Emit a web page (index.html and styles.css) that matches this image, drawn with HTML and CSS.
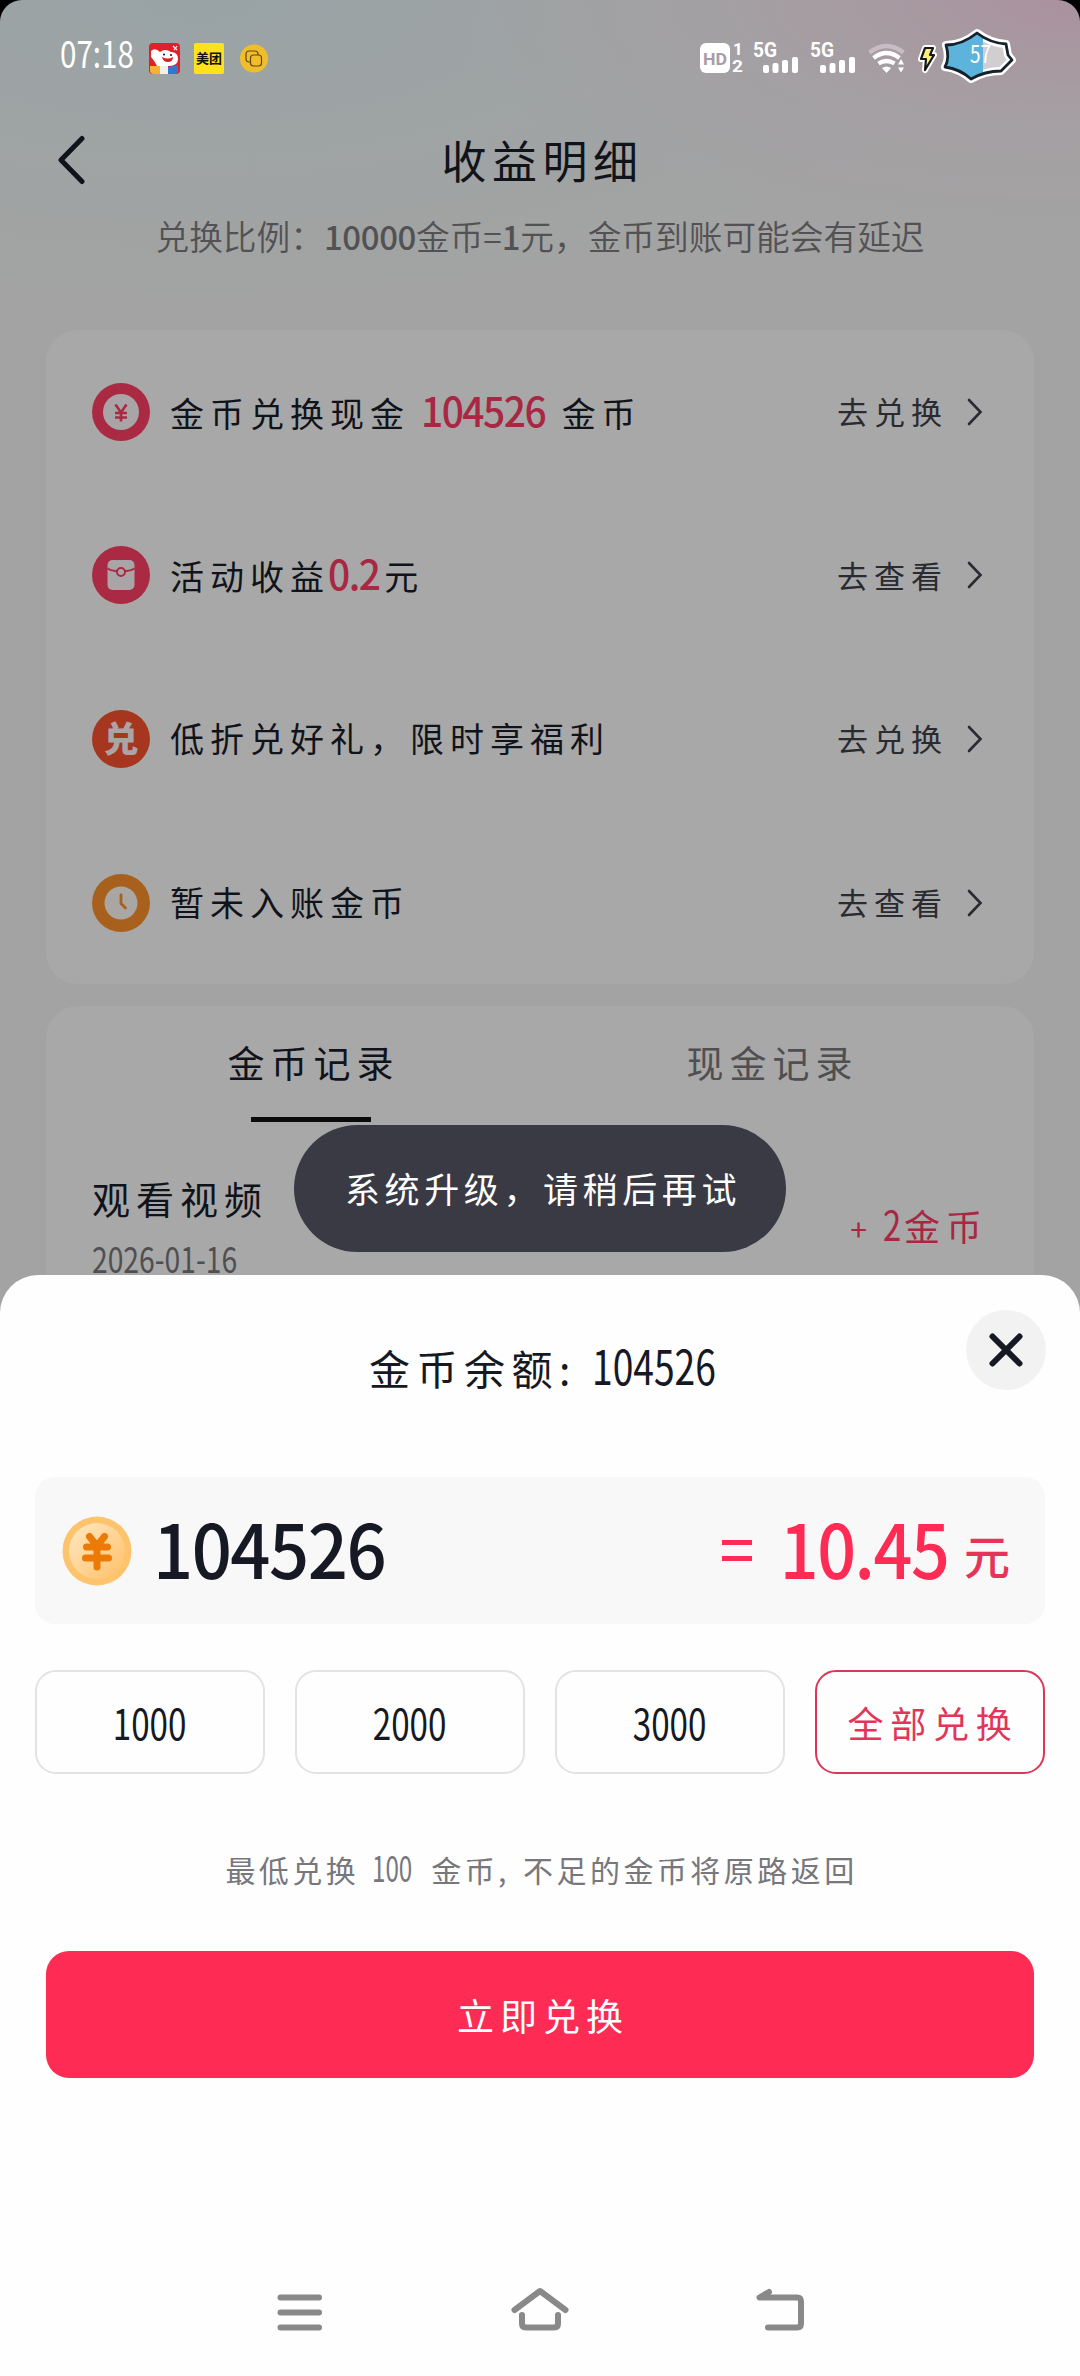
FILE: index.html
```html
<!DOCTYPE html>
<html lang="zh-CN">
<head>
<meta charset="utf-8">
<title>收益明细</title>
<link rel="stylesheet" href="styles.css">
</head>
<body>
<div class="screen">
  <div class="phone">
    <header class="status">
      <span class="clock"><span class="narrow">07:18</span></span>
      <svg class="app-jd" width="31" height="31" viewBox="0 0 31 31">
        <rect width="31" height="31" rx="4" fill="#e3202a"/>
        <path d="M2 8Q6 4 11 9Q16 5 22 9Q29 9 29 16Q29 23 20 23L8 23Q5 17 2 14Z" fill="#fff"/>
        <path d="M13 14q6 3 11 0q0 5-5 5t-6-5z" fill="#d8212b"/>
        <circle cx="15" cy="11.500" r="1.100" fill="#222"/><circle cx="22" cy="12" r="1.100" fill="#222"/>
        <path d="M24 3l4 4M28 3l-3 4" stroke="#fff" stroke-width="1.200"/>
        <path d="M1 23h10v8H5q-4 0-4-4z" fill="#f6b52c"/><path d="M11 23h8v8h-8z" fill="#f4efe9"/>
        <path d="M19 24l10-2v5q0 4-4 4h-6z" fill="#3576cf"/>
      </svg>
      <span class="app-mt">美团</span>
      <svg class="app-coin" width="28" height="29" viewBox="0 0 28 29" fill="none" stroke="#5c4a14" stroke-width="1.200">
        <circle cx="14" cy="14.500" r="14" fill="#f2bd2c" stroke="none"/>
        <path d="M10 18H9a3 3 0 0 1-3-3V10a3 3 0 0 1 3-3h6a3 3 0 0 1 3 3v1"/>
        <rect x="10.500" y="11" width="11" height="11" rx="3"/>
      </svg>
      <svg class="signals" width="316" height="60" viewBox="0 0 316 60">
        <rect x="0" y="15" width="30" height="30" rx="6" fill="#fff"/>
        <text x="3" y="37" class="hd" textLength="24" lengthAdjust="spacingAndGlyphs">HD</text>
        <text x="33" y="27" class="sig-num">1</text><text x="32" y="44" class="sig-num" textLength="11" lengthAdjust="spacingAndGlyphs">2</text>
        <text x="53" y="29" class="sig" textLength="24" lengthAdjust="spacingAndGlyphs">5G</text>
        <text x="110" y="29" class="sig" textLength="24" lengthAdjust="spacingAndGlyphs">5G</text>
        <g fill="#fff">
          <rect x="63" y="37" width="6" height="8" rx="2"/><rect x="72.500" y="35" width="6" height="10" rx="2"/><rect x="82" y="32" width="6" height="13" rx="2"/><rect x="92" y="29" width="6" height="16" rx="2"/>
          <rect x="120" y="37" width="6" height="8" rx="2"/><rect x="129.500" y="35" width="6" height="10" rx="2"/><rect x="139" y="32" width="6" height="13" rx="2"/><rect x="149" y="29" width="6" height="16" rx="2"/>
        </g>
        <g fill="none" stroke="#fff" stroke-width="4.200">
          <path d="M169.500 24.500Q186.500 11.500 203.500 24.500" stroke="#c9bdc5"/>
          <path d="M173.500 30Q186.500 20 199.500 30"/>
          <path d="M178.500 35.500Q186.500 30.500 194.500 35.500"/>
        </g>
        <path d="M182 40q4.500-3 9 0l-4.500 5zM198 36.500l3-5.500 3 5.500zM198 39.500l3 5 3-5z" fill="#fff"/>
        <path d="M225 20h8l-3 7h4l-9 15 1-11h-5z" fill="#f5ee7e" stroke="#fff" stroke-width="6" stroke-linejoin="round"/>
        <path d="M225 20h8l-3 7h4l-9 15 1-11h-5z" fill="#f5ee7e" stroke="#17171a" stroke-width="2.200" stroke-linejoin="round"/>
        <path d="M277 5Q290 15 306 16L308 27L312 32L301 43Q285 43 271 51Q260 41 245 39Q250 30 246 17Q262 17 277 5Z" fill="#d0ced1" stroke="#fff" stroke-width="8" stroke-linejoin="round"/>
        <path d="M283 9.500V46.500L271 51Q260 41 245 39Q250 30 246 17Q262 17 277 5Z" fill="#5cb4dc"/>
        <path d="M277 5Q290 15 306 16L308 27L312 32L301 43Q285 43 271 51Q260 41 245 39Q250 30 246 17Q262 17 277 5Z" fill="none" stroke="#15222b" stroke-width="2.800" stroke-linejoin="round"/>
        <text x="270" y="35" class="battery-num" textLength="21" lengthAdjust="spacingAndGlyphs">57</text>
      </svg>
    </header>

    <div class="titlebar">
      <svg class="back" width="30" height="50" viewBox="0 0 30 50"><path d="M25 3.500L4 25L25 46.500" fill="none" stroke="#11131b" stroke-width="5" stroke-linecap="round" stroke-linejoin="round"/></svg>
      <h1>收益明细</h1>
    </div>
    <p class="ratio">兑换比例：<b>10000</b>金币=<b>1</b>元，金币到账可能会有延迟</p>

    <section class="card">
      <div class="row">
        <svg class="ico" width="58" height="58" viewBox="0 0 58 58"><circle cx="29" cy="29" r="29" fill="#a92a42"/><circle cx="29" cy="29" r="18" fill="#a9a4a6"/><path d="M23.500 21.500L29 29.500L34.500 21.500M29 29.500V38.500M23 30h12M23 34.500h12" fill="none" stroke="#a92a42" stroke-width="2.600"/></svg>
        <span class="label">金币兑换现金<b class="mid">104526</b>金币</span>
        <span class="go">去兑换</span><svg class="chev" width="16" height="28" viewBox="0 0 16 28"><path d="M2 2L13.500 14L2 26"/></svg>
      </div>
      <div class="row">
        <svg class="ico" width="58" height="58" viewBox="0 0 58 58"><circle cx="29" cy="29" r="29" fill="#a92a42"/><rect x="15.500" y="14" width="27" height="30" rx="5" fill="#a9a4a6"/><path d="M15.500 22.500Q20 25.500 25 25M42.500 22.500Q38 25.500 33 25" fill="none" stroke="#a92a42" stroke-width="2"/><circle cx="29" cy="26" r="4" fill="#a9a4a6" stroke="#a92a42" stroke-width="2"/></svg>
        <span class="label">活动收益<b class="tight">0.2</b>元</span>
        <span class="go">去查看</span><svg class="chev" width="16" height="28" viewBox="0 0 16 28"><path d="M2 2L13.500 14L2 26"/></svg>
      </div>
      <div class="row">
        <span class="ico dui">兑</span>
        <span class="label">低折兑好礼，限时享福利</span>
        <span class="go">去兑换</span><svg class="chev" width="16" height="28" viewBox="0 0 16 28"><path d="M2 2L13.500 14L2 26"/></svg>
      </div>
      <div class="row">
        <svg class="ico" width="58" height="58" viewBox="0 0 58 58"><circle cx="29" cy="29" r="29" fill="#a8611c"/><circle cx="29" cy="29" r="16.500" fill="#a9a6a3"/><path d="M29 21V29.500L33.500 34" fill="none" stroke="#a8611c" stroke-width="2.800" stroke-linecap="round" stroke-linejoin="round"/></svg>
        <span class="label">暂未入账金币</span>
        <span class="go">去查看</span><svg class="chev" width="16" height="28" viewBox="0 0 16 28"><path d="M2 2L13.500 14L2 26"/></svg>
      </div>
    </section>

    <section class="card records">
      <nav class="tabs">
        <span class="tab active">金币记录</span>
        <span class="tab">现金记录</span>
      </nav>
      <div class="record">
        <div class="what">
          <span class="name">观看视频</span>
          <span class="date"><span class="narrow">2026-01-16</span></span>
        </div>
        <span class="gain"><i class="plus">+</i><i class="narrow two">2</i>金币</span>
      </div>
    </section>
  </div>

  <div class="toast">系统升级，请稍后再试</div>

  <section class="sheet">
    <div class="sheet-head">
      <h2>金币余额<span class="colon">:</span><span class="total"><span class="narrow">104526</span></span></h2>
      <button class="close"><svg width="36" height="36" viewBox="0 0 36 36"><path d="M4.500 4.500L31.500 31.500M31.500 4.500L4.500 31.500" stroke="#161823" stroke-width="6" stroke-linecap="round"/></svg></button>
    </div>
    <div class="balance">
      <svg class="coin" width="70" height="70" viewBox="0 0 70 70">
        <defs><linearGradient id="face" x1="0" y1="0" x2="1" y2="1"><stop offset="0" stop-color="#ffe9c2"/><stop offset="1" stop-color="#ffc069"/></linearGradient></defs>
        <circle cx="35" cy="35" r="34.500" fill="#fdc36d"/><circle cx="35" cy="35" r="28" fill="url(#face)"/>
        <path d="M27.500 20.500L35 30L42.500 20.500M35 30V51M24.500 31H45.500M23.500 42H46.500" fill="none" stroke="#ec7a06" stroke-width="7" stroke-linecap="round" stroke-linejoin="round"/>
      </svg>
      <span class="amount">104526</span>
      <span class="equals"></span>
      <span class="money">10.45</span>
      <span class="yuan">元</span>
    </div>
    <div class="choices">
      <button class="choice"><span class="narrow">1000</span></button>
      <button class="choice"><span class="narrow">2000</span></button>
      <button class="choice"><span class="narrow">3000</span></button>
      <button class="choice all">全部兑换</button>
    </div>
    <p class="hint">最低兑换<span class="hundred"><span class="narrow">100</span></span>金币<span class="comma">,</span>不足的金币将原路返回</p>
    <button class="submit">立即兑换</button>
    <footer class="sysnav">
      <svg width="46" height="44" viewBox="0 0 46 44"><path d="M3.500 10.500H42M3.500 25.500H42M3.500 40.500H42"/></svg>
      <svg width="58" height="44" viewBox="0 0 58 44"><path d="M3.500 23L29 4L54.500 23M11 28V36.500Q11 40.500 15 40.500H43Q47 40.500 47 36.500V28"/></svg>
      <svg width="48" height="44" viewBox="0 0 48 44"><path d="M13 5L3.500 10.500H41Q45 10.500 45 14.500V36.500Q45 40.500 41 40.500H12"/></svg>
    </footer>
  </section>
</div>
</body>
</html>
```

FILE: styles.css
```css
* { box-sizing: border-box; }
body {
  margin: 0;
  background: #000;
  font-family: "Noto Sans CJK SC", "Noto Sans", sans-serif;
  font-weight: 400;
  color: #11131b;
}
h1, h2, p { margin: 0; font-weight: 400; }
button { border: 0; padding: 0; background: none; font: inherit; color: inherit; }
i { font-style: normal; }
svg { display: block; flex: none; }

.screen { position: relative; width: 1080px; height: 2376px; overflow: hidden; background: #000; }
.phone {
  display: flex;
  flex-direction: column;
  height: 2376px;
  border-radius: 22px 22px 0 0;
  background:
    radial-gradient(ellipse 640px 230px at 1080px 0, #aa929e 0, rgba(166, 158, 163, .6) 55%, rgba(163, 163, 163, 0) 100%),
    radial-gradient(ellipse 800px 300px at 200px 0, #99a3a6 0, rgba(157, 164, 164, .6) 55%, rgba(163, 163, 163, 0) 100%),
    #a3a3a3;
}
.narrow { display: inline-block; transform: scaleX(.8); transform-origin: 0 50%; }

/* status bar */
.status { display: flex; align-items: center; height: 116px; padding: 0 64px 0 60px; color: #fff; }
.clock { width: 89px; font-size: 37px; line-height: 44px; margin-top: -12px; white-space: nowrap; }
.app-mt {
  width: 30px; height: 31px; margin-left: 14px; border-radius: 2px; background: #ffe11e; color: #111;
  font-size: 13px; font-weight: 700; line-height: 30px; text-align: center;
}
.app-coin { margin-left: 16px; }
.signals { margin: -1px 0 0 auto; overflow: visible; }
.hd { font: 700 17px Roboto, sans-serif; fill: #a89da6; }
.sig { font: 700 20px Roboto, sans-serif; fill: #fff; }
.sig-num { font: 700 17px Roboto, sans-serif; fill: #fff; }
.battery-num { font: 400 24px "Noto Sans CJK SC", sans-serif; fill: #fff; }

/* title */
.titlebar { display: grid; grid-template-columns: 85px 1fr 85px; align-items: center; height: 90px; margin-top: -1px; }
.back { margin-left: 57px; }
h1 { text-align: center; font-size: 45px; line-height: 60px; letter-spacing: 5.500px; text-indent: 5px; }
.ratio { margin-top: 6px; height: 50px; line-height: 50px; text-align: center; font-size: 33.700px; font-weight: 350; color: #525254; }
.ratio b { font-weight: 500; font-size: 33px; letter-spacing: -.4px; }

/* cards */
.card { margin: 69px 46px 0; height: 654px; border-radius: 32px; background: #a8a8a8; }
.card .row { display: flex; align-items: center; height: 163.600px; padding: 0 51px 0 46px; }
.ico { width: 58px; height: 58px; flex: none; }
.dui {
  border-radius: 50%; background: #a7361e; color: #aaa5a4;
  font-size: 35px; font-weight: 900; line-height: 54px; text-align: center;
}
.label { margin: -2px 0 0 20px; font-size: 34px; letter-spacing: 6px; line-height: 50px; white-space: nowrap; }
.label b {
  display: inline-block; color: #a82743; font-weight: 500; font-size: 41px; letter-spacing: -1.600px; line-height: 50px;
  transform: scaleX(.95); transform-origin: 0 50%;
}
.label .mid { margin: 0 10px 0 11px; }
.label .tight { margin: 0 2px 0 -2px; }
.go { margin: -2px 0 0 auto; font-size: 31px; letter-spacing: 6px; color: #2a2b31; }
.chev { margin-left: 19px; fill: none; stroke: #2a2b31; stroke-width: 2.600; stroke-linecap: round; }

.records { margin-top: 22px; border-radius: 32px 32px 0 0; }
.tabs { display: flex; padding: 0 35px; height: 116px; }
.tab {
  position: relative; flex: 1; padding-top: 28px; text-align: center; font-size: 37px; line-height: 56px;
  letter-spacing: 6px; text-indent: 6px; color: #4f4f51;
}
.tab.active { color: #11131b; }
.tab.active::after { content: ""; position: absolute; left: 50%; top: 111px; width: 120px; height: 5px; margin-left: -60px; background: #0a0b0d; }
.record { display: flex; padding: 51px 46px 0; }
.what { display: flex; flex-direction: column; }
.name { font-size: 38px; letter-spacing: 6px; line-height: 50px; }
.date { height: 50px; margin-top: 9px; font-size: 36px; line-height: 50px; color: #4f4f51; }
.date .narrow { transform: scaleX(.785); }
.gain { margin-left: auto; margin-top: 23px; font-size: 36px; line-height: 54px; letter-spacing: 6px; color: #a82743; }
.plus { margin-right: 10px; font-size: 30px; }
.two { width: 21px; font-size: 41px; }

/* toast */
.toast {
  position: absolute; left: 294px; top: 1125px; width: 492px; height: 127px; border-radius: 64px;
  background: #393a44; color: #fff; font-size: 35px; letter-spacing: 4.600px; text-indent: 6px;
  line-height: 125px; text-align: center;
}

/* bottom sheet */
.sheet {
  position: absolute; left: 0; bottom: 0; width: 1080px; height: 1101px; padding: 35px 35px 0;
  border-radius: 38px 38px 0 0; background: #fefefe; color: #161823;
}
.sheet-head { display: flex; height: 167px; }
h2 { flex: 1; padding: 19px 0 0 334px; height: 92px; white-space: nowrap; font-size: 41px; line-height: 70px; letter-spacing: 6.500px; }
.colon { display: inline-block; width: 33px; letter-spacing: 0; }
.total { font-size: 48px; letter-spacing: 0; }
.total .narrow { width: 120px; transform: scaleX(.775); }
.close { display: grid; place-items: center; width: 80px; height: 80px; margin-right: -1px; border-radius: 50%; background: #f2f2f3; }
.balance { display: flex; align-items: center; height: 147px; padding: 0 35px 0 27px; border-radius: 20px; background: #f8f8f8; }
.amount, .money { font-size: 75px; font-weight: 500; line-height: 100px; letter-spacing: -1.600px; margin-top: -7px; }
.amount { margin-left: 21px; transform: scaleX(.94); transform-origin: 0 50%; }
.equals { width: 30px; height: 21px; margin-left: auto; margin-right: 11px; border: solid #fe2c55; border-width: 5px 0; }
.money { color: #fe2c55; transform: scaleX(.91); transform-origin: 100% 50%; }
.yuan { margin: 6px 0 0 16px; font-size: 46px; font-weight: 500; line-height: 60px; color: #e63458; }
.choices { display: grid; grid-template-columns: repeat(4, 1fr); gap: 30px; margin-top: 46px; }
.choice { height: 104px; border: 2px solid #e3e3e4; border-radius: 21px; font-size: 42px; line-height: 92px; }
.choice .narrow { transform: scaleX(.79); transform-origin: 50% 50%; }
.all { border-color: #dd3659; color: #e2355a; font-size: 36px; letter-spacing: 6.800px; text-indent: 6px; line-height: 96px; }
.hint { height: 50px; margin-top: 68px; text-align: center; white-space: nowrap; font-size: 30px; letter-spacing: 3.450px; text-indent: 3px; line-height: 50px; color: #77777c; }
.hundred { display: inline-block; width: 72px; padding-left: 13px; font-size: 35px; letter-spacing: 0; text-align: left; text-indent: 0; }
.hundred .narrow { transform: scaleX(.69); }
.comma { display: inline-block; width: 25px; text-align: left; text-indent: 0; }
.submit {
  display: block; width: 988px; height: 127px; margin: 59px 0 0 11px; border-radius: 23px;
  background: #fe2c55; color: #fff; font-size: 37px; letter-spacing: 6px; text-indent: 6px; line-height: 124px;
}
.sysnav { display: flex; gap: 187.500px; margin: 209px 0 0 242px; fill: none; stroke: #898989; stroke-width: 6; stroke-linecap: round; stroke-linejoin: round; }
```
